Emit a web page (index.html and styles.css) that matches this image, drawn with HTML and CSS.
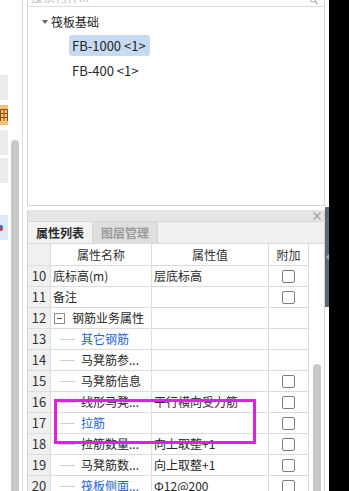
FILE: index.html
```html
<!DOCTYPE html>
<html>
<head>
<meta charset="utf-8">
<link rel="stylesheet" href="styles.css">
</head>
<body>
<div class="app">
  <div class="side">
    <div class="side-items">
      <div class="si si-1"></div>
      <div class="si si-2">
        <svg class="si-icon" width="8" height="14" viewBox="0 0 8 14"><path d="M0.5 1.5H7.5V13M0.5 5.5H7.5M0.5 9.5H7.5M4 1.5V13M0.5 1.5V13" fill="none" stroke="#8a4f1a" stroke-width="1"/></svg>
      </div>
      <div class="si si-3"></div>
      <div class="si si-4"></div>
      <div class="si si-5"><span class="si-dot"></span></div>
    </div>
    <div class="side-scroll"></div>
  </div>
  <div class="spacer"></div>
  <div class="panel">
    <div class="top-box">
      <div class="search">
        <span class="search-text">搜索构件...</span>
        <svg class="search-icon" width="9" height="9" viewBox="0 0 9 9"><circle cx="4" cy="-1" r="3" fill="none" stroke="#aaa" stroke-width="1"/><path d="M6 1.5L8.5 4" stroke="#aaa" stroke-width="1.2"/></svg>
      </div>
      <div class="tree">
        <div class="tree-root"><span class="caret"></span><span class="root-label">筏板基础</span></div>
        <div class="tree-item"><span class="item-label selected">FB-1000 &lt;1&gt;</span></div>
        <div class="tree-item second"><span class="item-label">FB-400 &lt;1&gt;</span></div>
      </div>
    </div>
    <div class="gap"></div>
    <div class="dock">
      <div class="dock-title">
        <svg class="close" width="8" height="8" viewBox="0 0 8 8"><path d="M0.5 0.5L7.5 7.5M7.5 0.5L0.5 7.5" stroke="#a0a0a0" stroke-width="1.2"/></svg>
      </div>
      <div class="tabs">
        <div class="tab active">属性列表</div>
        <div class="tab inactive">图层管理</div>
      </div>
      <div class="grid-wrap">
        <div class="rows">
          <div class="row head"><div class="c num"></div><div class="c hc">属性名称</div><div class="c hc">属性值</div><div class="c hc">附加</div></div>
          <div class="row"><div class="c num">10</div><div class="c name">底标高(m)</div><div class="c val">层底标高</div><div class="c chk"><span class="box"></span></div></div>
          <div class="row"><div class="c num">11</div><div class="c name">备注</div><div class="c val"></div><div class="c chk"><span class="box"></span></div></div>
          <div class="row"><div class="c num">12</div><div class="c name"><span class="minus"></span><span class="grp">钢筋业务属性</span></div><div class="c val"></div><div class="c chk"></div></div>
          <div class="row"><div class="c num">13</div><div class="c name"><span class="dash"></span><span class="blue">其它钢筋</span></div><div class="c val"></div><div class="c chk"></div></div>
          <div class="row"><div class="c num">14</div><div class="c name"><span class="dash"></span><span>马凳筋参...</span></div><div class="c val"></div><div class="c chk"></div></div>
          <div class="row"><div class="c num">15</div><div class="c name"><span class="dash"></span><span>马凳筋信息</span></div><div class="c val"></div><div class="c chk"><span class="box"></span></div></div>
          <div class="row"><div class="c num">16</div><div class="c name"><span class="dash"></span><span>线形马凳...</span></div><div class="c val">平行横向受力筋</div><div class="c chk"><span class="box"></span></div></div>
          <div class="row"><div class="c num">17</div><div class="c name"><span class="dash"></span><span class="blue">拉筋</span></div><div class="c val"></div><div class="c chk"><span class="box"></span></div></div>
          <div class="row"><div class="c num">18</div><div class="c name"><span class="dash"></span><span>拉筋数量...</span></div><div class="c val">向上取整+1</div><div class="c chk"><span class="box"></span></div></div>
          <div class="row"><div class="c num">19</div><div class="c name"><span class="dash"></span><span>马凳筋数...</span></div><div class="c val">向上取整+1</div><div class="c chk"><span class="box"></span></div></div>
          <div class="row"><div class="c num">20</div><div class="c name"><span class="dash"></span><span class="blue">筏板侧面...</span></div><div class="c val">Ф12@200</div><div class="c chk"><span class="box"></span></div></div>
        </div>
        <div class="vtrack"><div class="vthumb"></div></div>
      </div>
    </div>
  </div>
  <div class="edge"><div class="edge-bar"><span class="edge-tri"></span></div></div>
  <div class="black"></div>
  <div class="highlight"></div>
</div>
</body>
</html>
```
FILE: styles.css
```css
* { box-sizing: border-box; }
html, body { margin: 0; padding: 0; }
body {
  font-family: "Noto Sans CJK SC", "Noto Sans", sans-serif;
  color: #262626;
  background: #fff;
}
.app {
  position: relative;
  display: flex;
  width: 349px;
  height: 491px;
  overflow: hidden;
  background: #fff;
}
/* left strip */
.side {
  width: 23px;
  border-right: 1px solid #dadada;
  display: flex;
  flex-shrink: 0;
}
.side-items {
  width: 8px;
  display: flex;
  flex-direction: column;
}
.si { height: 25px; background: #ebebeb; }
.si-1 { margin-top: 75px; }
.si-2 { margin-top: 5px; height: 20px; background: #f0c272; display: flex; align-items: center; }
.si-icon { display: block; }
.si-3 { margin-top: 5px; }
.si-4 { margin-top: 3px; }
.si-5 { margin-top: 32px; background: #dce9f8; display: flex; align-items: center; }
.si-dot {
  width: 3px; height: 6px;
  background: linear-gradient(#3b6fd4 50%, #d04040 50%);
  border-radius: 0 2px 2px 0;
}
.side-scroll {
  margin-left: 3px;
  margin-top: 140px;
  width: 8px;
  background: #c8c8c8;
  border-radius: 4px 4px 0 0;
}
.spacer { width: 4px; flex-shrink: 0; }
/* panel */
.panel {
  width: 298px;
  flex-shrink: 0;
  display: flex;
  flex-direction: column;
}
.top-box {
  height: 206px;
  border: 1px solid #d4d4d4;
  border-top: none;
}
.search {
  height: 7px;
  border-bottom: 1px solid #dcdcdc;
  overflow: hidden;
  display: flex;
  justify-content: space-between;
  padding: 0 6px 0 3px;
}
.search-text {
  display: block;
  font-size: 12px;
  line-height: 14px;
  margin-top: -10px;
  color: #bcbcbc;
}
.search-icon { display: block; }
.tree {
  display: flex;
  flex-direction: column;
  padding-top: 5px;
}
.tree-root {
  height: 20px;
  display: flex;
  align-items: center;
  padding-left: 14px;
}
.caret {
  width: 0; height: 0;
  border-left: 3px solid transparent;
  border-right: 3px solid transparent;
  border-top: 4px solid #666;
  margin-right: 3px;
}
.root-label { font-size: 12px; line-height: 20px; color: #262626; }
.tree-item {
  margin-top: 3px;
  height: 21px;
  padding-left: 41px;
  display: flex;
}
.tree-item.second { margin-top: 4px; }
.item-label {
  font-size: 13px;
  line-height: 21px;
  padding: 0 4px 0 3px;
  color: #262626;
  border-radius: 3px;
}
.item-label.selected { background: #c6dbf2; }
.gap { height: 4px; }
/* dock */
.dock {
  flex: 1;
  display: flex;
  flex-direction: column;
  border-left: 1px solid #d4d4d4;
  border-right: 1px solid #d4d4d4;
  min-height: 0;
}
.dock-title {
  height: 12px;
  background: #e5e5e5;
  border-bottom: 1px solid #d8d8d8;
  display: flex;
  justify-content: flex-end;
  align-items: center;
  padding-right: 3px;
}
.close { display: block; }
.tabs {
  height: 22px;
  background: #f0f0f0;
  border-bottom: 1px solid #dcdcdc;
  display: flex;
}
.tab {
  width: 65px;
  font-size: 12px;
  font-weight: 700;
  line-height: 21px;
  text-align: center;
  border-right: 1px solid #d4d4d4;
}
.tab.active { background: #f2f2f2; color: #2a2a2a; }
.tab.inactive { background: #dedede; color: #9a9a9a; }
.grid-wrap {
  flex: 1;
  display: flex;
  min-height: 0;
}
.rows { width: 281px; }
.row {
  display: grid;
  grid-template-columns: 23px 101px 117px 40px;
  height: 21px;
}
.row.head { height: 22px; }
.c {
  border-right: 1px solid #dcdcdc;
  border-bottom: 1px solid #dcdcdc;
  font-size: 12px;
  line-height: 20px;
  white-space: nowrap;
  overflow: hidden;
  display: flex;
  align-items: center;
}
.num {
  background: #f0f0f0;
  justify-content: center;
  font-size: 13px;
  color: #333;
}
.hc { justify-content: center; color: #333; }
.name { padding-left: 2px; }
.val { padding-left: 2px; }
.chk { justify-content: center; }
.box {
  width: 13px; height: 13px;
  border: 1px solid #7d7d7d;
  border-radius: 2px;
  background: #fff;
}
.minus {
  position: relative;
  width: 11px; height: 11px;
  border: 1px solid #8c8c8c;
  margin-left: 1px;
  margin-right: 7px;
  flex-shrink: 0;
  display: flex;
  align-items: center;
  justify-content: center;
}
.minus::after {
  content: "";
  width: 5px; height: 1px;
  background: #555;
}
.dash {
  width: 15px;
  height: 1px;
  background: #cfcfcf;
  margin-left: 7px;
  margin-right: 6px;
  flex-shrink: 0;
}
.blue { color: #2463d9; }
.vtrack {
  flex: 1;
  display: flex;
  flex-direction: column;
  padding-left: 4px;
}
.vthumb {
  margin-top: 120px;
  width: 8px;
  flex: 1;
  background: #c8c8c8;
  border-radius: 4px 4px 0 0;
}
/* right edge */
.edge {
  width: 4px;
  flex-shrink: 0;
}
.edge-bar {
  margin-top: 207px;
  height: 100px;
  background: #5d6877;
  display: flex;
  align-items: center;
  padding-left: 1px;
}
.edge-tri {
  width: 0; height: 0;
  border-top: 3px solid transparent;
  border-bottom: 3px solid transparent;
  border-right: 3px solid #aeb5be;
}
.black { flex: 1; background: #000; }
/* annotation overlay */
.highlight {
  position: absolute;
  left: 54px;
  top: 399px;
  width: 202px;
  height: 45px;
  border: 3px solid #e01fe0;
}
```
